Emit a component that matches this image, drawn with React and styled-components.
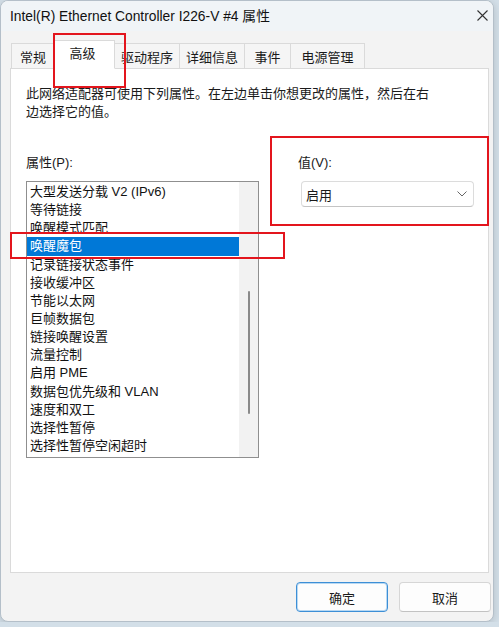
import React from "react";
import styled, { createGlobalStyle } from "styled-components";

const Global = createGlobalStyle`
  html, body { margin: 0; padding: 0; background: #d3dfe8; }
  body { font-family: "Liberation Sans", "Noto Sans CJK SC", sans-serif; }
  * { box-sizing: border-box; }
`;

const FONT = `"Liberation Sans", "Noto Sans CJK SC", sans-serif`;

const Win = styled.div`
  position: relative;
  width: 494px;
  height: 622px;
  background: #f3f3f3;
  border: 1px solid #b4bfc9;
  border-radius: 8px;
  overflow: hidden;
  display: flex;
  flex-direction: column;
  font-family: ${FONT};
  color: #1a1a1a;
  font-size: 13px;
  box-shadow: 0 2px 8px rgba(0, 0, 0, 0.15);
`;

const TitleBar = styled.div`
  height: 30px;
  flex: none;
  display: flex;
  align-items: center;
  justify-content: space-between;
  padding: 0 4px 2px 9px;
  background: #f0f4f7;
  font-size: 13.8px;
  color: #111;
`;

const CloseBtn = styled.div`
  display: flex;
  align-items: center;
  justify-content: center;
  width: 14px;
  height: 14px;
`;

const Body = styled.div`
  flex: 1;
  display: flex;
  flex-direction: column;
  padding: 8px 4px 0 9px;
`;

const TabRow = styled.div`
  height: 29px;
  display: flex;
  align-items: flex-end;
  padding-left: 2px;
  position: relative;
  z-index: 1;
`;

const Tab = styled.div`
  width: ${(p) => p.$w}px;
  height: ${(p) => (p.$active ? 29 : 25)}px;
  display: flex;
  align-items: center;
  justify-content: center;
  padding-bottom: ${(p) => (p.$active ? 4 : 0)}px;
  padding-right: ${(p) => (p.$active ? 4 : 0)}px;
  background: ${(p) => (p.$active ? "#ffffff" : "#f5f5f5")};
  border: 1px solid #dadada;
  border-bottom: ${(p) => (p.$active ? "1px solid #ffffff" : "none")};
  margin-left: -1px;
  margin-bottom: ${(p) => (p.$active ? -1 : 0)}px;
  font-size: 13px;
  white-space: nowrap;
`;

const Panel = styled.div`
  height: 505px;
  background: #ffffff;
  border: 1px solid #dadada;
  padding: 16px 14px 0 15px;
`;

const Desc = styled.div`
  font-size: 13px;
  line-height: 18px;
  width: 408px;
`;

const Columns = styled.div`
  display: flex;
  margin-top: 33px;
`;

const LeftCol = styled.div`
  width: 233px;
  display: flex;
  flex-direction: column;
`;

const RightCol = styled.div`
  margin-left: 39px;
  display: flex;
  flex-direction: column;
`;

const Label = styled.div`
  font-size: 13px;
  line-height: 18px;
  height: 18px;
  margin-bottom: 9px;
`;

const ListBox = styled.div`
  height: 277px;
  border: 1px solid #8f8f8f;
  background: #fff;
  display: flex;
`;

const Items = styled.div`
  flex: 1;
  padding-top: 1px;
  display: flex;
  flex-direction: column;
`;

const Item = styled.div`
  height: 18.15px;
  line-height: 18px;
  padding-left: 3px;
  font-size: 13px;
  white-space: nowrap;
  background: ${(p) => (p.$sel ? "#0078d7" : "transparent")};
  color: ${(p) => (p.$sel ? "#ffffff" : "#111")};
`;

const ScrollTrack = styled.div`
  width: 19px;
  background: #f2f2f2;
  display: flex;
  justify-content: center;
  padding-top: 109px;
`;

const Thumb = styled.div`
  width: 2px;
  height: 123px;
  border-radius: 1px;
  background: #8a8a8a;
`;

const Select = styled.div`
  margin-left: 3px;
  width: 173px;
  height: 26px;
  border: 1px solid #dcdcdc;
  border-bottom-color: #c4c4c4;
  border-radius: 4px;
  background: #fff;
  display: flex;
  align-items: center;
  justify-content: space-between;
  padding: 0 6px 0 4px;
  font-size: 13px;
`;

const Footer = styled.div`
  flex: 1;
  display: flex;
  justify-content: flex-end;
  align-items: flex-start;
  gap: 11px;
  padding-top: 9px;
  margin-right: -2px;
`;

const Button = styled.div`
  width: 92px;
  height: 30px;
  display: flex;
  align-items: center;
  justify-content: center;
  background: #fdfdfd;
  border: 1px solid ${(p) => (p.$primary ? "#3d8fd6" : "#d6d6d6")};
  box-shadow: ${(p) => (p.$primary ? "inset 0 0 0 1px #b9d9f3" : "none")};
  border-bottom-color: ${(p) => (p.$primary ? "#3d8fd6" : "#c2c2c2")};
  border-radius: 4px;
  font-size: 13px;
  color: #1a1a1a;
`;

const Mark = styled.div`
  position: absolute;
  left: ${(p) => p.$x}px;
  top: ${(p) => p.$y}px;
  width: ${(p) => p.$w}px;
  height: ${(p) => p.$h}px;
  border: 2px solid #e3151d;
  pointer-events: none;
  z-index: 5;
`;

const tabs = [
  { t: "常规", w: 44 },
  { t: "高级", w: 61, a: true },
  { t: "驱动程序", w: 66 },
  { t: "详细信息", w: 66 },
  { t: "事件", w: 47 },
  { t: "电源管理", w: 75 },
];

const items = [
  "大型发送分载 V2 (IPv6)",
  "等待链接",
  "唤醒模式匹配",
  "唤醒魔包",
  "记录链接状态事件",
  "接收缓冲区",
  "节能以太网",
  "巨帧数据包",
  "链接唤醒设置",
  "流量控制",
  "启用 PME",
  "数据包优先级和 VLAN",
  "速度和双工",
  "选择性暂停",
  "选择性暂停空闲超时",
];

export default function App() {
  return (
    <>
      <Global />
      <Win>
        <TitleBar>
          <span>Intel(R) Ethernet Controller I226-V #4 属性</span>
          <CloseBtn>
            <svg width="11" height="11" viewBox="0 0 11 11">
              <path d="M0.5 0.5 L10.5 10.5 M10.5 0.5 L0.5 10.5" stroke="#333" strokeWidth="1.1" fill="none" />
            </svg>
          </CloseBtn>
        </TitleBar>
        <Body>
          <TabRow>
            {tabs.map((t) => (
              <Tab key={t.t} $w={t.w} $active={t.a}>
                {t.t}
              </Tab>
            ))}
          </TabRow>
          <Panel>
            <Desc>此网络适配器可使用下列属性。在左边单击你想更改的属性，然后在右边选择它的值。</Desc>
            <Columns>
              <LeftCol>
                <Label>属性(P):</Label>
                <ListBox>
                  <Items>
                    {items.map((it) => (
                      <Item key={it} $sel={it === "唤醒魔包"}>
                        {it}
                      </Item>
                    ))}
                  </Items>
                  <ScrollTrack>
                    <Thumb />
                  </ScrollTrack>
                </ListBox>
              </LeftCol>
              <RightCol>
                <Label>值(V):</Label>
                <Select>
                  <span>启用</span>
                  <svg width="10" height="6" viewBox="0 0 10 6">
                    <path d="M0.5 0.5 L5 5 L9.5 0.5" stroke="#666" strokeWidth="1" fill="none" />
                  </svg>
                </Select>
              </RightCol>
            </Columns>
          </Panel>
          <Footer>
            <Button $primary>确定</Button>
            <Button>取消</Button>
          </Footer>
        </Body>
        <Mark $x={52} $y={32} $w={73} $h={55} />
        <Mark $x={9} $y={231} $w={275} $h={27} />
        <Mark $x={269} $y={135} $w={219} $h={90} />
      </Win>
    </>
  );
}
